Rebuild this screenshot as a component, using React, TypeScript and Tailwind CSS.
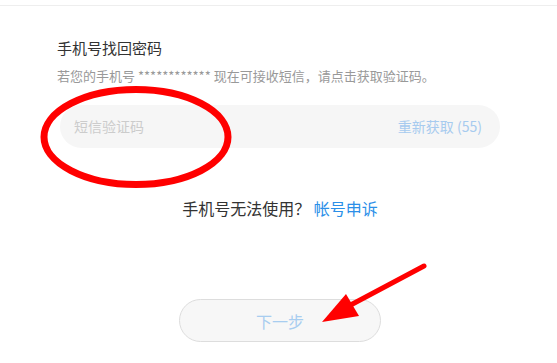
export default function App(): JSX.Element {
  return (
    <div
      className="relative w-[557px] h-[363px] bg-white overflow-hidden"
      style={{ fontFamily: '"Noto Sans CJK SC", "Noto Sans", sans-serif' }}
    >
      <div className="h-[6px] border-b border-[#eeeeee]" />
      <div className="ml-[57px] w-[446px] flex flex-col">
        <h1 className="mt-[32px] text-[15px] leading-[20px] text-[#333333]">手机号找回密码</h1>
        <p className="mt-[9px] text-[13px] leading-[18px] text-[#999999]">
          若您的手机号 ************ 现在可接收短信，请点击获取验证码。
        </p>
        <div className="mt-[20px] mx-[3px] h-[43px] rounded-full bg-[#f6f6f6] flex items-center justify-between pl-[14px] pr-[18px]">
          <span className="text-[14px] text-[#cccccc]">短信验证码</span>
          <span className="text-[14px] text-[#a7cbef]">重新获取 (55)</span>
        </div>
        <div className="mt-[49px] text-center text-[16px] leading-[22px] text-[#333333]">
          手机号无法使用？ <span className="text-[#2b8fe8]">帐号申诉</span>
        </div>
        <div className="mt-[80px] self-center w-[202px] h-[43px] rounded-full border border-[#dddddd] bg-[#f7f7f7] flex items-center justify-center text-[16px] text-[#a8cdf0]">
          下一步
        </div>
      </div>

      {/* annotations drawn over the screenshot */}
      <svg className="absolute inset-0 pointer-events-none" width="557" height="363">
        <ellipse cx="136" cy="137" rx="92" ry="47.5" fill="none" stroke="#ff0000" strokeWidth="7" />
        <line x1="424" y1="266" x2="345" y2="308" stroke="#ff0000" strokeWidth="5" strokeLinecap="round" />
        <polygon points="322,322 346,294 359,316" fill="#ff0000" />
      </svg>
    </div>
  );
}
